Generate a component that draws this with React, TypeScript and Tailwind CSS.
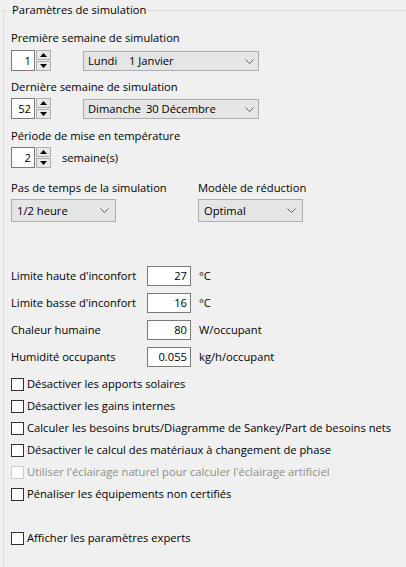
import React from 'react';

const SpinArrow = ({ up }: { up?: boolean }) => (
  <svg width="7" height="4" viewBox="0 0 7 4" className="block">
    {up ? <polygon points="3.5,0 7,4 0,4" fill="#000" /> : <polygon points="0,0 7,0 3.5,4" fill="#000" />}
  </svg>
);

const Chevron = () => (
  <svg width="9" height="5" viewBox="0 0 9 5" className="block">
    <polyline points="0.5,0.5 4.5,4.5 8.5,0.5" fill="none" stroke="#5f5f5f" strokeWidth="1" />
  </svg>
);

const Spinner = ({ value }: { value: string }) => (
  <div className="flex h-[21px] items-stretch">
    <div className="w-[24px] border border-[#7a7a7a] bg-white pr-[3px] text-right leading-[19px]">{value}</div>
    <div className="ml-[1px] flex w-[15px] flex-col gap-[1px]">
      <div className="flex flex-1 items-center justify-center border border-[#adadad] bg-[#e8e8e8]">
        <SpinArrow up />
      </div>
      <div className="flex flex-1 items-center justify-center border border-[#adadad] bg-[#e8e8e8]">
        <SpinArrow />
      </div>
    </div>
  </div>
);

const Combo = ({ children, className }: { children: React.ReactNode; className: string }) => (
  <div className={`flex items-center justify-between border border-[#adadad] bg-[#e5e5e5] ${className}`}>
    <div className="flex items-center whitespace-nowrap">{children}</div>
    <Chevron />
  </div>
);

const fields = [
  { label: "Limite haute d'inconfort", value: '27', unit: '°C' },
  { label: "Limite basse d'inconfort", value: '16', unit: '°C' },
  { label: 'Chaleur humaine', value: '80', unit: 'W/occupant' },
  { label: 'Humidité occupants', value: '0.055', unit: 'kg/h/occupant' },
];

const options = [
  { label: 'Désactiver les apports solaires' },
  { label: 'Désactiver les gains internes' },
  { label: 'Calculer les besoins bruts/Diagramme de Sankey/Part de besoins nets' },
  { label: 'Désactiver le calcul des matériaux à changement de phase' },
  { label: "Utiliser l'éclairage naturel pour calculer l'éclairage artificiel", disabled: true },
  { label: 'Pénaliser les équipements non certifiés' },
];

const CheckRow = ({ label, disabled }: { label: string; disabled?: boolean }) => (
  <div className="flex h-[22px] items-center">
    <div
      className={`h-[13px] w-[13px] shrink-0 border bg-white ${disabled ? 'border-[#cccccc]' : 'border-[#333333]'}`}
    />
    <span className={`ml-[3px] whitespace-nowrap ${disabled ? 'text-[#8d8d8d]' : 'text-black'}`}>{label}</span>
  </div>
);

export default function App() {
  return (
    <div className="h-[567px] w-[406px] overflow-hidden bg-[#f0f0f0] font-['Open_Sans','Noto_Sans',sans-serif] text-[11.2px] leading-[16px] text-black">
      <fieldset className="ml-[3px] mt-[2px] h-[570px] border-l border-t border-[#dcdcdc] pl-[7px]">
        <legend className="px-[1px] leading-[16px]">Paramètres de simulation</legend>

        <div className="mt-[12px] h-[16px]">Première semaine de simulation</div>
        <div className="mt-[4px] flex h-[21px] items-end">
          <Spinner value="1" />
          <Combo className="ml-[32px] h-[20px] w-[176px] pl-[4px] pr-[4px]">
            <span className="w-[41px] shrink-0">Lundi</span>
            <span>1 Janvier</span>
          </Combo>
        </div>

        <div className="mt-[8px] h-[16px]">Dernière semaine de simulation</div>
        <div className="mt-[3px] flex h-[21px] items-end">
          <Spinner value="52" />
          <Combo className="ml-[32px] h-[20px] w-[176px] pl-[4px] pr-[4px]">
            <span className="shrink-0">Dimanche</span>
            <span className="ml-[5px]">30 Décembre</span>
          </Combo>
        </div>

        <div className="mt-[9px] h-[16px]">Période de mise en température</div>
        <div className="mt-[3px] flex h-[21px] items-center">
          <Spinner value="2" />
          <span className="ml-[11px]">semaine(s)</span>
        </div>

        <div className="mt-[12px] flex h-[16px]">
          <span className="w-[187px]">Pas de temps de la simulation</span>
          <span>Modèle de réduction</span>
        </div>
        <div className="mt-[3px] flex h-[23px]">
          <Combo className="h-[23px] w-[105px] pl-[5px] pr-[6px]">1/2 heure</Combo>
          <Combo className="ml-[82px] h-[23px] w-[105px] pl-[5px] pr-[6px]">Optimal</Combo>
        </div>

        <div className="mt-[40px] flex flex-col">
          {fields.map((f) => (
            <div key={f.label} className="flex h-[27px] items-center">
              <span className="w-[136px] whitespace-nowrap">{f.label}</span>
              <div className="h-[20px] w-[44px] border border-[#7a7a7a] bg-white pr-[3px] text-right leading-[18px]">
                {f.value}
              </div>
              <span className="ml-[8px]">{f.unit}</span>
            </div>
          ))}
        </div>

        <div className="mt-[3px] flex flex-col">
          {options.map((o) => (
            <CheckRow key={o.label} label={o.label} disabled={o.disabled} />
          ))}
        </div>

        <div className="mt-[22px]">
          <CheckRow label="Afficher les paramètres experts" />
        </div>
      </fieldset>
    </div>
  );
}
